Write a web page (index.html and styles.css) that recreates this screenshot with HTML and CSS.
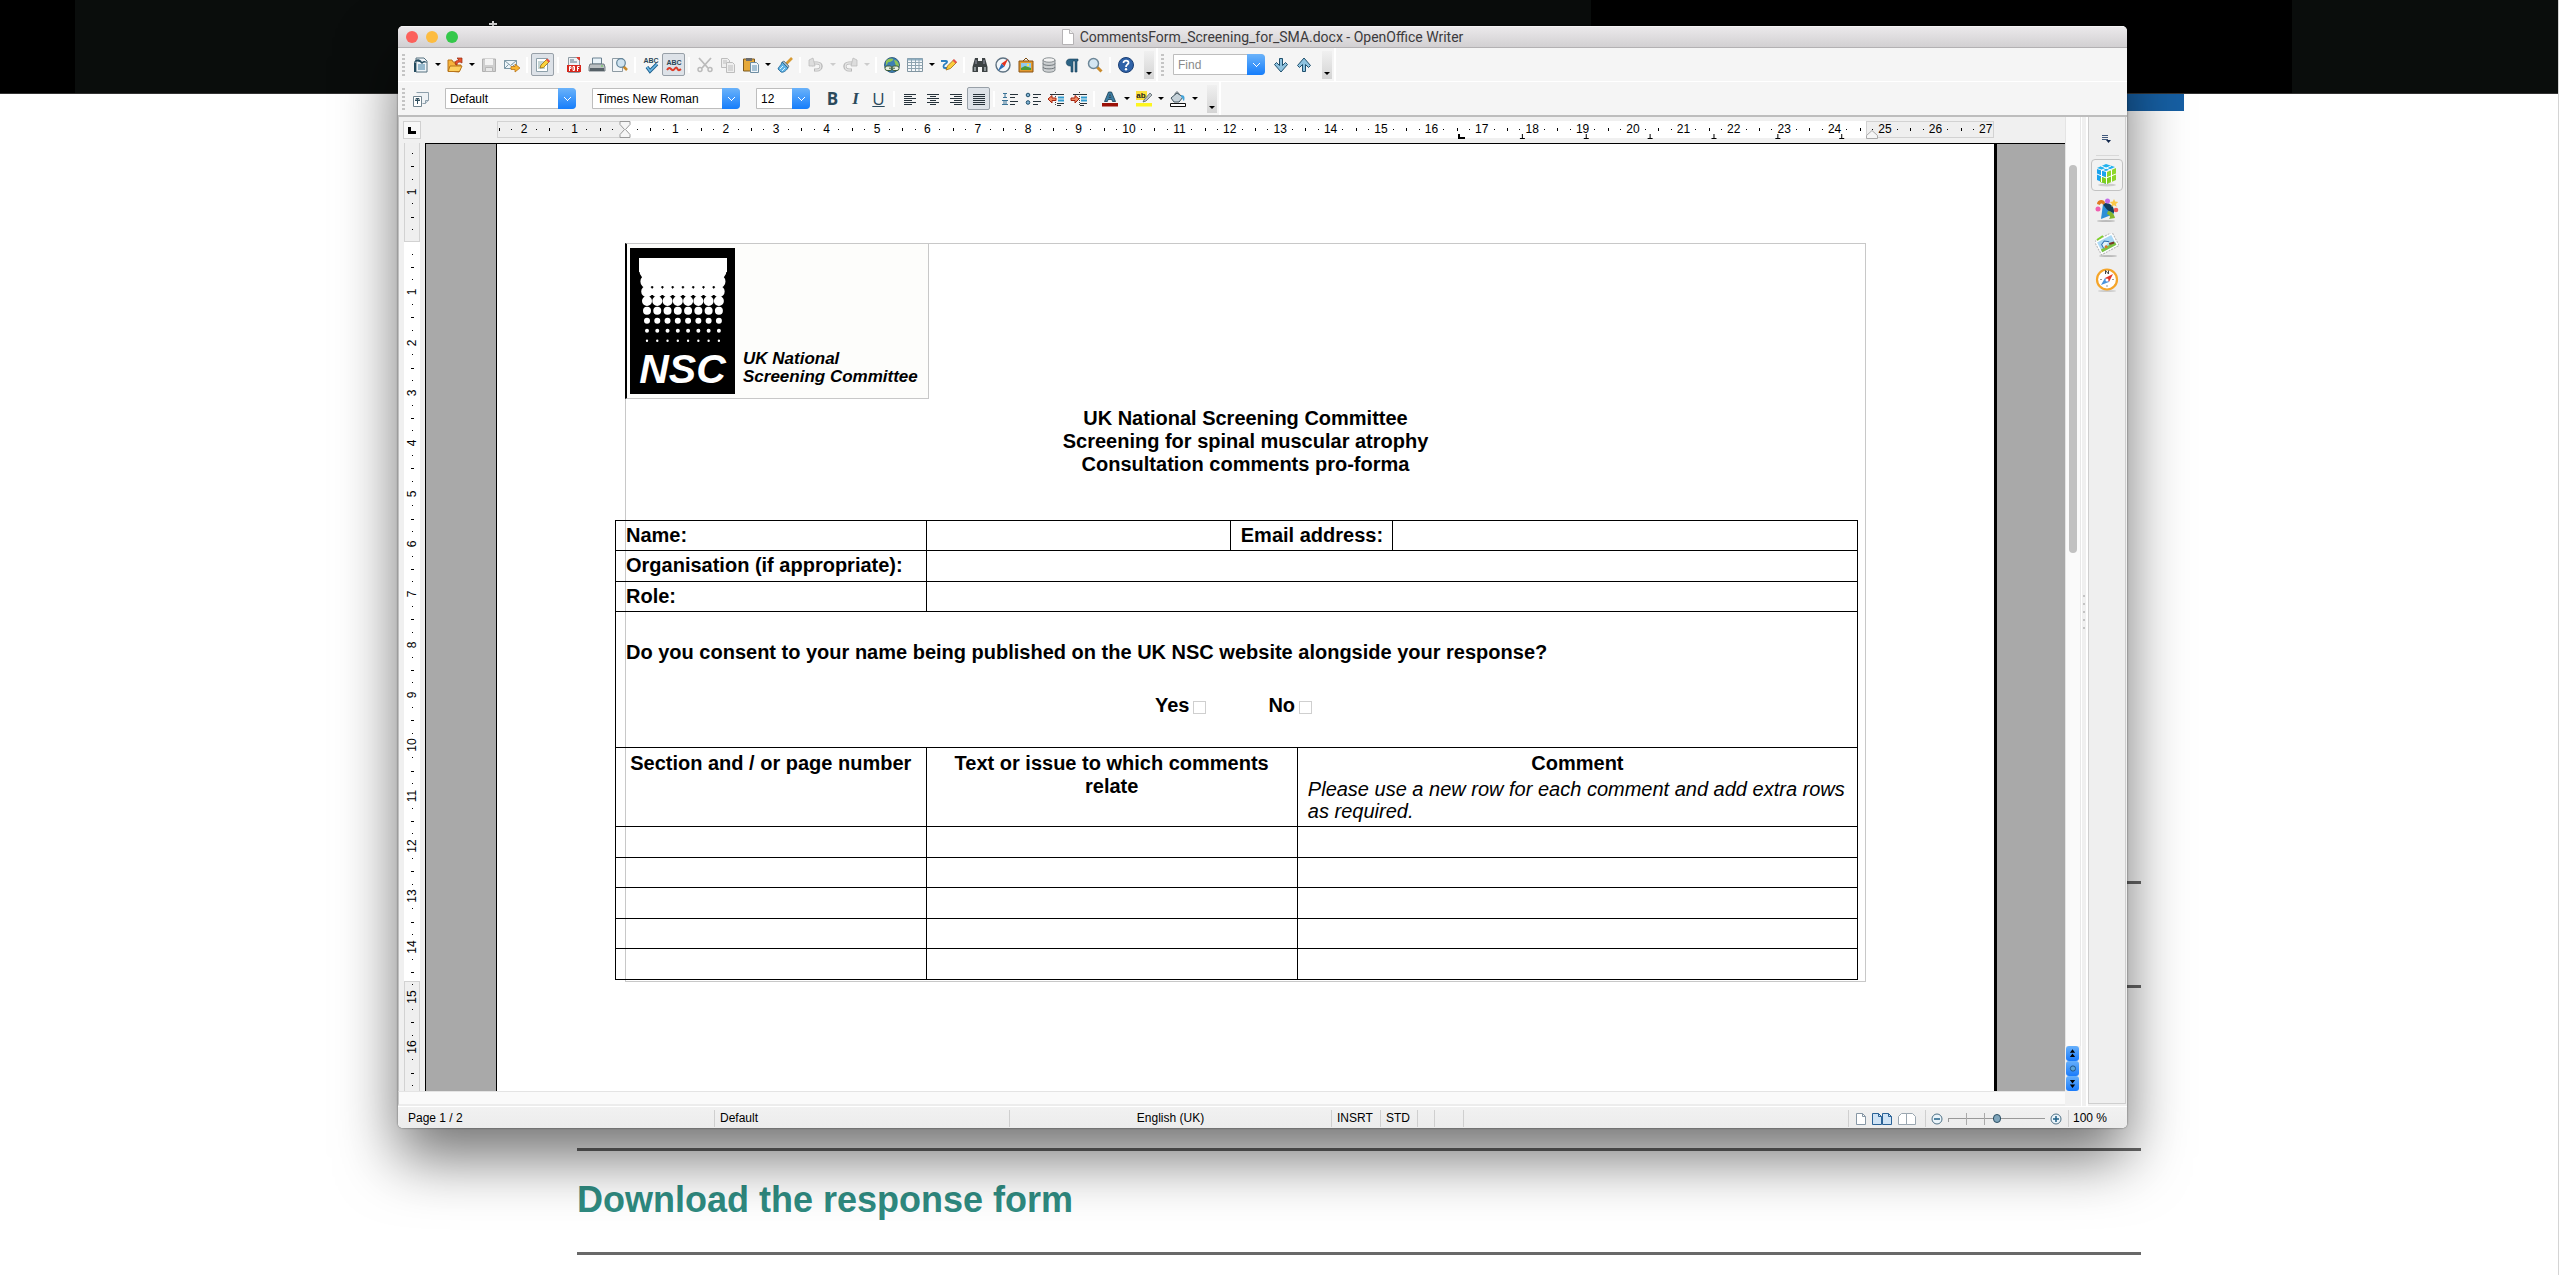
FILE: index.html
```html
<!DOCTYPE html>
<html lang="en-GB">
<head>
<meta charset="utf-8">
<title>CommentsForm_Screening_for_SMA.docx - OpenOffice Writer</title>
<link rel="stylesheet" href="styles.css">
</head>
<body>
<div class="site">
  <header class="site-header"><svg class="crown" width="10" height="8" viewBox="0 0 10 8"><path d="M4 0h2v2h3v2H6v4H4V4H1V2h3z" fill="#ddd"/></svg></header>
  <div class="site-accent"></div>
  <main class="site-main">
    <div class="rule-box"></div>
    <section class="download"><h2>Download the response form</h2></section>
  </main>
</div>

<div class="window">
  <div class="titlebar">
    <div class="lights">
      <button class="light red" aria-label="Close"></button>
      <button class="light amber" aria-label="Minimise"></button>
      <button class="light green" aria-label="Zoom"></button>
    </div>
    <h1 class="title"><svg width="12" height="16" viewBox="0 0 12 16"><path d="M.5.5h7l4 4v11H.5z" fill="#fff" stroke="#b5b3b5"/><path d="M7.500.5v4h4" fill="#eee" stroke="#b5b3b5"/></svg>CommentsForm_Screening_for_SMA.docx - OpenOffice Writer</h1>
  </div>

  <div class="toolbar-row">
    <div class="toolbar">
      <span class="grip"></span>
      <button class="tool" aria-label="New"><svg viewBox="0 0 16 16"><path d="M3 1h8l3 3v11H3z" fill="#eef4f8" stroke="#56707f"/><path d="M5 8h7M5 10h7M5 12h7" stroke="#3f7fa3"/><path d="M1 5c3-4 6-3 8 0 2-2 4-1 5 1-3-1-4 0-5 1C7 4 4 4 1 5z" fill="#234a5e"/><path d="M1 5v10h2V6z" fill="#234a5e"/></svg></button><span class="drop"></span>
      <button class="tool" aria-label="Open"><svg viewBox="0 0 16 16"><path d="M1 14V3h4l1 2h3v3h5l-2 7z" fill="#f6b43c" stroke="#b8741a"/><path d="M3 9h12l-2.500 5.500H1z" fill="#fdd05e" stroke="#b8741a"/><path d="M8 7c0-3 2-4 4-4l-2-2h5v5l-2-1c-2 0-3 1-3 3z" fill="#e8512c" stroke="#962c10" stroke-width=".7"/></svg></button><span class="drop"></span>
      <button class="tool" aria-label="Save"><svg viewBox="0 0 16 16"><path d="M1.500 2h13v12.500h-13z" fill="#cfcfcf" stroke="#b0b0b0"/><path d="M4 2h8v6H4z" fill="#f3f3f3"/><path d="M4.500 10.500h7v4h-7z" fill="#e8e8e8" stroke="#b8b8b8"/></svg></button>
      <button class="tool" aria-label="Document as e-mail"><svg viewBox="0 0 16 16"><path d="M.5 3.500h12v8H.5z" fill="#eef5f9" stroke="#7c97a5"/><path d="M.5 3.500l6 5 6-5M.5 11.500l4-4M12.500 11.500l-4-4" fill="none" stroke="#7c97a5"/><path d="M7 9.500h4V7l5 4-5 4v-2.500H7z" fill="#fbb52d" stroke="#b8741a" stroke-width=".8"/></svg></button>
      <span class="sep"></span>
      <button class="tool on" aria-label="Edit file"><svg viewBox="0 0 16 16"><path d="M1.500 1.500h11v13h-11z" fill="#fff" stroke="#8da0aa"/><path d="M3 5h6M3 7h4M3 9h3M3 11h7" stroke="#8aa"/><path d="M5 11l1-3 6-6 2.500 2.500-6 6z" fill="#fcd23c" stroke="#9a6a10" stroke-width=".8"/><path d="M11 3l1.500-1.500L15 4l-1.500 1.500z" fill="#e5524c"/></svg></button>
      <span class="sep"></span>
      <button class="tool" aria-label="Export as PDF"><svg viewBox="0 0 16 16"><path d="M2.500.5h8l3 3v12h-11z" fill="#eef2f5" stroke="#8d9aa3"/><path d="M4 3h4M4 5h7" stroke="#5a7688"/><path d="M10 0h4v4z" fill="#e33b2e"/><path d="M1 8h14v7H1z" fill="#d7271c"/><path d="M3.500 14V9.500h1.500v2H3.500M7 9.500v4h1.500v-4zM11.500 14V9.500h2M11.500 11.500H13" fill="none" stroke="#fff"/></svg></button>
      <button class="tool" aria-label="Print"><svg viewBox="0 0 16 16"><path d="M3.500 1h9v6h-9z" fill="#e9f2f8" stroke="#6b8191"/><path d="M1 7h14l1 3v4H0v-4z" fill="#b9bec1" stroke="#59656c" stroke-width=".8"/><path d="M1 11h14v3H1z" fill="#566067"/><path d="M12 9h2" stroke="#5fd04a"/></svg></button>
      <button class="tool" aria-label="Page preview"><svg viewBox="0 0 16 16"><path d="M.5 1.500h10v13H.5z" fill="#f2f5f7" stroke="#8d9aa3"/><path d="M11 9l4 4" stroke="#c98a2b" stroke-width="2.500"/><circle cx="9" cy="6" r="4.300" fill="#cfe3f0" stroke="#62849a" stroke-width="1.200"/></svg></button>
      <span class="sep"></span>
      <button class="tool" aria-label="Spelling and grammar"><svg viewBox="0 0 16 16"><text x="8" y="6" class="abc">ABC</text><path d="M4 10l3 4 7-7" fill="none" stroke="#1d5f8e" stroke-width="3.500"/><path d="M4 10l3 4 7-7" fill="none" stroke="#6db9e6" stroke-width="1.600"/></svg></button>
      <button class="tool on" aria-label="AutoSpellcheck"><svg viewBox="0 0 16 16"><text x="8" y="8" class="abc">ABC</text><path d="M1 13c2-3 3-2 4-1s2 2 3.500 0 2-2 3 0 2 1 3.500 0" fill="none" stroke="#dc3c28" stroke-width="2"/></svg></button>
      <span class="sep"></span>
      <button class="tool" aria-label="Cut"><svg viewBox="0 0 16 16"><path d="M2 1l9 10M14 1L5 11" stroke="#bbb" stroke-width="1.800"/><circle cx="3" cy="12.500" r="2" fill="none" stroke="#bbb" stroke-width="1.500"/><circle cx="13" cy="12.500" r="2" fill="none" stroke="#bbb" stroke-width="1.500"/></svg></button>
      <button class="tool" aria-label="Copy"><svg viewBox="0 0 16 16"><g fill="#eee" stroke="#bdbdbd"><path d="M1.500 1.500h6l2 2v7h-8z"/><path d="M6.500 5.500h6l2 2v8h-8z"/><path d="M3 4h4M3 6h3M8 9h5M8 11h5M8 13h5"/></g></svg></button>
      <button class="tool" aria-label="Paste"><svg viewBox="0 0 16 16"><path d="M.5 2h11v12H.5z" fill="#e6a93a" stroke="#7d5a20"/><path d="M3 1h6v3H3z" fill="#6d6d6d"/><path d="M7.500 5.500h6l2 2v8h-8z" fill="#f0f5f9" stroke="#6f8ea3"/><path d="M9 9h5M9 11h5M9 13h5" stroke="#5b8db0"/></svg></button><span class="drop"></span>
      <button class="tool" aria-label="Format paintbrush"><svg viewBox="0 0 16 16"><path d="M9 7l6-6" stroke="#d79a32" stroke-width="2.600"/><path d="M7 4l5 5-1 2-6-6z" fill="#9fb3bf" stroke="#4c6878" stroke-width=".7"/><path d="M5 5l6 6c-2 3-5 5-7 4l-3-3c0-2 3-3 4-7z" fill="#5db1e4" stroke="#20618e" stroke-width=".8"/><path d="M3 12l3-3M5 14l3-3" stroke="#d8efff"/></svg></button>
      <span class="sep"></span>
      <button class="tool" aria-label="Undo"><svg viewBox="0 0 16 16"><path d="M2 6h7c6 0 5 7 0 7H6" fill="none" stroke="#b8b8b8" stroke-width="3.200"/><path d="M5 2.500L1.500 6 5 9.500M2 6h7c5 0 5 7 0 7H7" fill="none" stroke="#e2e2e2" stroke-width="1.400"/><path d="M5 1L1 3v6h6z" fill="#ddd" stroke="#b8b8b8" stroke-width=".7"/></svg></button><span class="drop off"></span>
      <button class="tool" aria-label="Redo"><svg viewBox="0 0 16 16"><path d="M13 6H7c-6 0-5 7 0 7h3" fill="none" stroke="#b8b8b8" stroke-width="3.200"/><path d="M14 6H7c-5 0-5 7 0 7h2" fill="none" stroke="#e2e2e2" stroke-width="1.400"/><path d="M11 1l4 2v6H9z" fill="#ddd" stroke="#b8b8b8" stroke-width=".7"/></svg></button><span class="drop off"></span>
      <span class="sep"></span>
      <button class="tool" aria-label="Hyperlink"><svg viewBox="0 0 16 16"><circle cx="8" cy="8" r="7.500" fill="#3c7fb3" stroke="#1e4b6d" stroke-width=".8"/><path d="M2 4c2-3 6-3 7-2s-2 3-4 3-1 3-3 3zM10 3c3 0 5 3 5 6h-3z" fill="#8fc455"/><g fill="#e9efdf" stroke="#3c5d3c"><rect x="1" y="9" width="7" height="4.500" rx="2"/><rect x="8" y="9" width="7" height="4.500" rx="2"/></g><path d="M5 11.200h6" stroke="#3c5d3c"/></svg></button>
      <button class="tool" aria-label="Table"><svg viewBox="0 0 16 16"><path d="M.5 1.500h15v13H.5z" fill="#f5f8fa" stroke="#8195a1"/><path d="M.5 2.500h15" stroke="#8fb0c4" stroke-width="2"/><path d="M.5 5.500h15M.5 8.500h15M.5 11.500h15M4.500 2v12M8.500 2v12M12 2v12" stroke="#8fa4b0"/></svg></button><span class="drop"></span>
      <button class="tool" aria-label="Show draw functions"><svg viewBox="0 0 16 16"><path d="M0 4h5c2 0 1 2-1 3s-2 4 0 4h2" fill="none" stroke="#2d7fc0" stroke-width="1.800"/><path d="M5 13l1.500-4 6-6L15.500 5.500l-6 6z" fill="#fbcd3c" stroke="#a06a12" stroke-width=".8"/><path d="M11.500 3.500L13 2l3 3-1.500 1.500z" fill="#e5524c"/></svg></button>
      <span class="sep"></span>
      <button class="tool" aria-label="Find and replace"><svg viewBox="0 0 16 16"><path d="M3 1h3v3h4V1h3l2.500 9v5H10v-5H6v5H.5v-5z" fill="#3d4244"/><path d="M2 10h2v4H2zM12 10h2v4h-2z" fill="#8d9598"/><path d="M4 3v4M12 3v4" stroke="#99a"/></svg></button>
      <button class="tool" aria-label="Navigator"><svg viewBox="0 0 16 16"><circle cx="8" cy="8" r="7" fill="#f2f6fa" stroke="#5e7282" stroke-width="1.400"/><path d="M13 2L9.500 9.500 6.500 6.500z" fill="#e5321e"/><path d="M3 14l3.500-7.500 3 3z" fill="#2c6db5"/></svg></button>
      <button class="tool" aria-label="Gallery"><svg viewBox="0 0 16 16"><path d="M5 4l3-3 3 3" fill="none" stroke="#7d4d14"/><path d="M1 4h14v11H1z" fill="#e39a2e" stroke="#8a5212"/><path d="M3 6h10v7H3z" fill="#8fc8ee"/><path d="M3 13v-2l4-2 6 2v2z" fill="#4b9b38"/><circle cx="10" cy="8" r="1.200" fill="#ffe34a"/></svg></button>
      <button class="tool" aria-label="Data sources"><svg viewBox="0 0 16 16"><path d="M2 3v10c0 3 12 3 12 0V3z" fill="#cdd0d2" stroke="#70777b" stroke-width=".8"/><ellipse cx="8" cy="3" rx="6" ry="2.200" fill="#f4f4f4" stroke="#70777b" stroke-width=".8"/><path d="M2 6.500c0 2.500 12 2.500 12 0M2 10c0 2.500 12 2.500 12 0" fill="none" stroke="#70777b"/></svg></button>
      <button class="tool" aria-label="Non-printing characters"><svg viewBox="0 0 16 16"><path d="M14 2H6C1 2 1 9 6 9h1v6h2V4h2v11h2V4h1z" fill="#2c6384" stroke="#17405a" stroke-width=".6"/></svg></button>
      <button class="tool" aria-label="Zoom"><svg viewBox="0 0 16 16"><path d="M10 10l4.500 4.500" stroke="#c98a2b" stroke-width="3"/><circle cx="6.500" cy="6.500" r="5" fill="#d4e6f2" stroke="#6d8798" stroke-width="1.500"/></svg></button>
      <span class="sep"></span>
      <button class="tool" aria-label="Help"><svg viewBox="0 0 16 16"><circle cx="8" cy="8" r="7.500" fill="#2f62a8" stroke="#1b3f74"/><path d="M5.500 6c0-3.500 5.500-3 5 0-.3 1.500-2.500 1.500-2.500 4" fill="none" stroke="#fff" stroke-width="1.800"/><circle cx="8" cy="12.300" r="1.200" fill="#fff"/></svg></button>
      <button class="more" aria-label="Toolbar options"></button>
    </div>
    <div class="toolbar find-bar">
      <span class="grip"></span>
      <label class="combo find"><input type="text" placeholder="Find" aria-label="Find"></label>
      <button class="tool" aria-label="Find next"><svg viewBox="0 0 16 16"><path d="M6.500 1.500h3v7l3-3 2 2L8 15 1.500 7.500l2-2 3 3z" fill="#8fc3e0" stroke="#1f4f6c"/></svg></button>
      <button class="tool" aria-label="Find previous"><svg viewBox="0 0 16 16"><path d="M6.500 14.500h3v-7l3 3 2-2L8 1 1.500 8.500l2 2 3-3z" fill="#8fc3e0" stroke="#1f4f6c"/></svg></button>
      <button class="more" aria-label="Toolbar options"></button>
    </div>
  </div>

  <div class="toolbar-row second">
    <div class="toolbar">
      <span class="grip"></span>
      <button class="tool" aria-label="Styles and formatting"><svg viewBox="0 0 16 16"><path d="M3.500 1.500h12v8l-3 3h-3" fill="#eef2f5" stroke="#8d9fab"/><path d="M12.500 12.500v-3h3" fill="#cdd8df" stroke="#8d9fab"/><path d="M.5 5.500h8v10h-8z" fill="#fff" stroke="#71848f"/><path d="M2 9.500h5M4.500 7v6M3 7.500h3v2H3z" stroke="#33505f" fill="none"/></svg></button>
      <label class="combo style"><select aria-label="Apply style"><option>Default</option></select></label>
      <label class="combo font"><select aria-label="Font name"><option>Times New Roman</option></select></label>
      <label class="combo size"><select aria-label="Font size"><option>12</option></select></label>
      <button class="tool letter b">B</button>
      <button class="tool letter i">I</button>
      <button class="tool letter u">U</button>
      <span class="sep"></span>
      <button class="tool" aria-label="Align left"><svg viewBox="0 0 16 16"><path d="M2 3.500h12M2 5.500h8M2 7.500h12M2 9.500h8M2 11.500h12M2 13.500h8" stroke="#26323a"/></svg></button>
      <button class="tool" aria-label="Centred"><svg viewBox="0 0 16 16"><path d="M2 3.500h12M5 5.500h6M2 7.500h12M5 9.500h6M2 11.500h12M5 13.500h6" stroke="#26323a"/></svg></button>
      <button class="tool" aria-label="Align right"><svg viewBox="0 0 16 16"><path d="M2 3.500h12M6 5.500h8M2 7.500h12M6 9.500h8M2 11.500h12M6 13.500h8" stroke="#26323a"/></svg></button>
      <button class="tool on" aria-label="Justified"><svg viewBox="0 0 16 16"><path d="M2 3.500h12M2 5.500h12M2 7.500h12M2 9.500h12M2 11.500h12M2 13.500h12" stroke="#26323a"/></svg></button>
      <span class="sep"></span>
      <button class="tool" aria-label="Numbering"><svg viewBox="0 0 16 16"><path d="M1 2.500h4M3 2v5M1 6.500h4M0 9.500h6M2 9v5M4 9v5M0 13.500h6" stroke="#3b7396"/><path d="M8 3.500h8M8 6.500h5M8 10.500h8M8 13.500h5" stroke="#26323a"/></svg></button>
      <button class="tool" aria-label="Bullets"><svg viewBox="0 0 16 16"><circle cx="3" cy="4" r="1.800" fill="#7fb2d2" stroke="#1f4f6c"/><circle cx="3" cy="11.500" r="1.800" fill="#7fb2d2" stroke="#1f4f6c"/><path d="M8 3.500h8M8 6.500h5M8 10.500h8M8 13.500h5" stroke="#26323a"/></svg></button>
      <button class="tool" aria-label="Decrease indent"><svg viewBox="0 0 16 16"><path d="M2 3.500h14M9 12.500h7M9 14.500h4" stroke="#26323a"/><path d="M10 6.500h6M10 9.500h6" stroke="#2e9bd0" stroke-width="2"/><path d="M7.500 1v14" stroke="#444" stroke-dasharray="1 1"/><path d="M0 8l4-3.500V7h4v2.500H4V12z" fill="#f08a62" stroke="#a6240e"/></svg></button>
      <button class="tool" aria-label="Increase indent"><svg viewBox="0 0 16 16"><path d="M2 3.500h14M9 12.500h7M9 14.500h4" stroke="#26323a"/><path d="M10 6.500h6M10 9.500h6" stroke="#2e9bd0" stroke-width="2"/><path d="M8.500 1v14" stroke="#444" stroke-dasharray="1 1"/><path d="M8 8L4 4.500V7H0v2.500h4V12z" fill="#f08a62" stroke="#a6240e"/></svg></button>
      <span class="sep"></span>
      <button class="tool" aria-label="Font colour"><svg viewBox="0 0 16 16"><path d="M2.500 10.500L6.500 1h3l4 9.500h-3l-.7-2H6l-.6 2zM7 6.500h2L8 3.500z" fill="#3c7da3" stroke="#163c52" stroke-width=".8"/><path d="M0 12h16v3.500H0z" fill="#9b1108"/></svg></button><span class="drop"></span>
      <button class="tool" aria-label="Highlighting"><svg viewBox="0 0 16 16"><path d="M0 0h11v9H0z" fill="#fbe03b"/><path d="M0 12h16v3.500H0z" fill="#fdf51f"/><text x="5" y="7" class="ab">ab</text><path d="M8 9l6-7 2 2-6 6-3 1z" fill="#b9c0c4" stroke="#5b676e" stroke-width=".8"/></svg></button><span class="drop"></span>
      <button class="tool" aria-label="Background colour"><svg viewBox="0 0 16 16"><path d="M5 4c0-4 4-4 4 0" fill="none" stroke="#4b5a63"/><path d="M1 7l6-5 6 4-4 5H4z" fill="#c6d2d9" stroke="#41545f"/><path d="M11 4c4 0 4 3 3 6-1 0-1-3-3-4z" fill="#44a3d8"/><path d="M.5 12.500h15v3H.5z" fill="#fff" stroke="#111"/></svg></button><span class="drop"></span>
      <button class="more" aria-label="Toolbar options"></button>
    </div>
  </div>

  <div class="workspace">
    <div class="editor">
      <div class="corner"><button class="tab-kind" aria-label="Tab type"><svg width="8" height="7"><path d="M0 0h3v4h5v3H0z"/></svg></button></div>
      <div class="hruler">
        <div class="zones"><span class="margin"></span><span class="text"></span><span class="margin last"></span></div>
        <ol class="cells">
          <li>2</li><li>1</li><li></li><li>1</li><li>2</li><li>3</li><li>4</li><li>5</li><li>6</li><li>7</li><li>8</li><li>9</li><li>10</li><li>11</li><li>12</li><li>13</li><li>14</li><li>15</li><li>16</li><li>17</li><li>18</li><li>19</li><li>20</li><li>21</li><li>22</li><li>23</li><li>24</li><li>25</li><li>26</li><li>27</li>
        </ol>
        <svg class="indent first" width="12" height="17" viewBox="0 0 12 17"><path d="M1 .5h10v3L6.500 8.500 11 13.500v3H1v-3l4.500-5L1 3.500z" fill="#f6f6f6" stroke="#999"/></svg>
        <svg class="indent last" width="12" height="9" viewBox="0 0 12 9"><path d="M.5 8.500v-3l5.500-5 5.500 5v3z" fill="#f6f6f6" stroke="#aaa"/></svg>
        <svg class="stops" viewBox="0 0 390 5" preserveAspectRatio="none"><path d="M0 0h2v3h5v2H0zM64 0h1v4h2v1h-5v-1h2zM128 0h1v4h2v1h-5v-1h2zM192 0h1v4h2v1h-5v-1h2zM256 0h1v4h2v1h-5v-1h2zM320 0h1v4h2v1h-5v-1h2zM384 0h1v4h2v1h-5v-1h2z"/></svg>
      </div>
      <div class="vruler">
        <div class="zones"><span class="margin"></span><span class="text"></span><span class="margin last"></span></div>
        <ol class="cells">
          <li></li><li><b>1</b></li><li></li><li><b>1</b></li><li><b>2</b></li><li><b>3</b></li><li><b>4</b></li><li><b>5</b></li><li><b>6</b></li><li><b>7</b></li><li><b>8</b></li><li><b>9</b></li><li><b>10</b></li><li><b>11</b></li><li><b>12</b></li><li><b>13</b></li><li><b>14</b></li><li><b>15</b></li><li><b>16</b></li><li></li>
        </ol>
      </div>
      <div class="canvas">
        <article class="sheet">
          <div class="text-area">
            <figure class="letterhead">
              <div class="nsc">
                <svg viewBox="0 0 105 96"><g fill="none" stroke="#fff" stroke-linecap="round" stroke-dasharray="0 10.270"><path d="M17 92.700h72.500" stroke-width="2.400"/><path d="M17 82.700h72.500" stroke-width="4"/><path d="M17 72.700h72.500" stroke-width="6"/><path d="M17 62.700h72.500" stroke-width="8"/><path d="M17 53h72.500" stroke-width="10"/><path d="M17 43.500h72.500" stroke-width="11.600"/><path d="M17 33.500h72.500" stroke-width="13.200"/><path d="M17 23.500h72.500" stroke-width="15"/><path d="M17 18h72.500" stroke-width="16"/></g><path d="M9 10h88v14H9z" fill="#fff"/><path d="M0 0h105v10H0z"/></svg>
                <strong>NSC</strong>
              </div>
              <figcaption>UK National<br>Screening Committee</figcaption>
            </figure>
            <h2 class="doc-title">UK National Screening Committee<br>Screening for spinal muscular atrophy<br>Consultation comments pro-forma</h2>
            <table class="form">
              <colgroup><col class="c1"><col class="c2"><col class="c3"><col class="c4"><col></colgroup>
              <tbody>
                <tr><th scope="row">Name:</th><td></td><th scope="row" colspan="2">Email address:</th><td></td></tr>
                <tr><th scope="row">Organisation (if appropriate):</th><td colspan="4"></td></tr>
                <tr><th scope="row">Role:</th><td colspan="4"></td></tr>
                <tr class="consent"><td colspan="5"><p>Do you consent to your name being published on the UK NSC website alongside your response?</p><div class="choices"><label>Yes<input type="checkbox"></label><label>No<input type="checkbox"></label></div></td></tr>
                <tr class="heads"><th scope="col">Section and / or page number</th><th scope="col" colspan="2">Text or issue to which comments relate</th><th scope="col" colspan="2">Comment<em>Please use a new row for each comment and add extra rows as required.</em></th></tr>
                <tr><td></td><td colspan="2"></td><td colspan="2"></td></tr>
                <tr><td></td><td colspan="2"></td><td colspan="2"></td></tr>
                <tr><td></td><td colspan="2"></td><td colspan="2"></td></tr>
                <tr><td></td><td colspan="2"></td><td colspan="2"></td></tr>
                <tr><td></td><td colspan="2"></td><td colspan="2"></td></tr>
              </tbody>
            </table>
          </div>
        </article>
      </div>
      <div class="hscroll"></div>
    </div>
    <div class="vscroll">
      <div class="track"><span class="thumb"></span></div>
      <button aria-label="Previous page"><svg viewBox="0 0 8 10"><path d="M4 0l3 4H1zM4 5l3 4H1z"/></svg></button>
      <button aria-label="Navigation"><svg viewBox="0 0 8 10"><circle cx="4.500" cy="5" r="3" fill="#5aa3d8" stroke="#1c4f80"/></svg></button>
      <button aria-label="Next page"><svg viewBox="0 0 8 10"><path d="M4 5L1 1h6zM4 10L1 6h6z"/></svg></button>
    </div>
    <div class="splitter"><i></i><i></i><i></i><i></i><i></i></div>
    <aside class="sidebar">
      <button class="side menu" aria-label="Sidebar settings"><svg viewBox="0 0 10 10"><path d="M0 1.500h6M0 3.500h6M0 5.500h6" stroke="#41597c"/><path d="M4 6h5L6.500 9z" fill="#12284c"/></svg></button>
      <hr>
      <button class="side on" aria-label="Properties"><svg viewBox="0 0 24 24"><ellipse cx="12" cy="22" rx="9" ry="1.500" fill="#ccc"/><path d="M2 5l9-4 9 3-9 4z" fill="#22b2ee"/><path d="M2 6l9 3v12l-9-4z" fill="#1aa3ee"/><path d="M12 9l9-4v12l-9 4z" fill="#8fd62a"/><path d="M5 15l7-2 6 2-6 6-7-2z" fill="#7fce1e"/><path d="M2 11l9 4 10-4M6.500 7v12M16.500 7v12M11.500 8v13M6 3l10 4M16 3L7 7" stroke="#fff" fill="none"/></svg></button>
      <button class="side" aria-label="Styles and formatting"><svg viewBox="0 0 24 24"><ellipse cx="11" cy="23" rx="9" ry="1" fill="#bbb"/><path d="M8 6c6 0 9 5 11 10l-13 5z" fill="#2b8fd6"/><path d="M8 6c5-3 12 2 11 9-4-1-8-3-11-9z" fill="#123d5e"/><path d="M2 6c0-5 8-5 8-1l-2 2c0-2-3-2-3 0z" fill="#e07b1f"/><path d="M13 13c4 0 6 3 7 7l-6 1c2-2 1-4-2-5z" fill="#86b62d"/><g fill="#f05fb0"><circle cx="3" cy="11" r="2.500"/><circle cx="12.500" cy="3" r="2.500" fill="#c56be8"/><circle cx="21" cy="12" r="2.300" fill="#f05a5a"/></g><path d="M19 1l1.200 2.600 3 .3-2.200 2 .6 2.900L19 7.300l-2.600 1.500.6-2.900-2.200-2 3-.3z" fill="#fbc84a"/></svg></button>
      <button class="side" aria-label="Gallery"><svg viewBox="0 0 24 24"><ellipse cx="13" cy="23" rx="9" ry="1" fill="#bbb"/><g transform="rotate(-28 12 11)"><path d="M2 3h20v15H2z" fill="#fff" stroke="#b5b5b5" stroke-dasharray="2 1"/><path d="M4 5h16v11H4z" fill="#a9d8f5"/><path d="M4 13h16v3H4z" fill="#7cc242"/><path d="M7 13V9l4-2 4 3" fill="#e5f3fb" stroke="#2a6db0"/><circle cx="10" cy="13" r="1.500" fill="#d5792a"/><path d="M14 12l5 1" stroke="#7a3524" stroke-width="2"/></g><path d="M2 7l6-4" stroke="#7fd02a" stroke-width="2"/></svg></button>
      <button class="side" aria-label="Navigator"><svg viewBox="0 0 24 24"><ellipse cx="12" cy="23" rx="9" ry="1" fill="#ccc"/><circle cx="12" cy="11.500" r="10" fill="#fff" stroke="#f5a52a" stroke-width="2.200"/><path d="M10.500 6V2.500l3 3.500V2.500" fill="none" stroke="#444"/><path d="M5 11.500h2M17 11.500h2M12 17v2" stroke="#999"/><path d="M18 6l-4 8-4-4z" fill="#e2382c"/><path d="M6 17l4-7 4 4z" fill="#4a93dc"/><circle cx="12" cy="12" r="1.500" fill="#fff"/></svg></button>
    </aside>
  </div>

  <footer class="status">
    <span class="s-page">Page 1 / 2</span>
    <span class="s-style">Default</span>
    <span class="s-lang">English (UK)</span>
    <span class="s-ins">INSRT</span>
    <span class="s-sel">STD</span>
    <span class="s-mod"></span>
    <span class="s-sig"></span>
    <span class="s-fill"></span>
    <span class="s-views">
      <button class="view" aria-label="Single page"><svg width="10" height="12"><path d="M.5.5h6l3 3v8h-9z" fill="#fff" stroke="#8797a5"/><path d="M6.500.5v3h3" fill="none" stroke="#8797a5"/></svg></button>
      <button class="view" aria-label="Multiple pages"><svg width="20" height="12"><path d="M.5.5h6l3 3v8h-9zM10.500.5h6l3 3v8h-9z" fill="#cfe3f5" stroke="#2a6296"/><path d="M6.500.5v3h3M16.500.5v3h3" fill="none" stroke="#2a6296"/></svg></button>
      <button class="view" aria-label="Book mode"><svg width="18" height="12"><path d="M.5 3.500l3-3h5v11h-8zM8.500.5h6l3 3v8h-9z" fill="#fff" stroke="#9aa6b0"/></svg></button>
    </span>
    <span class="s-zoom">
      <button class="view" aria-label="Zoom out"><svg width="12" height="12"><circle cx="6" cy="6" r="5" fill="#eaf4fa" stroke="#4f7186"/><path d="M3 6h6" stroke="#1f5f86" stroke-width="1.500"/></svg></button>
      <input type="range" min="0" max="100" value="50" aria-label="Zoom">
      <button class="view" aria-label="Zoom in"><svg width="12" height="12"><circle cx="6" cy="6" r="5" fill="#eaf4fa" stroke="#4f7186"/><path d="M3 6h6M6 3v6" stroke="#1f5f86" stroke-width="1.500"/></svg></button>
    </span>
    <span class="s-pct">100 %</span>
  </footer>
</div>
</body>
</html>
```
FILE: styles.css
```css
* { box-sizing: border-box; }

body {
  margin: 0;
  height: 100vh;
  overflow: hidden;
  background: #fff;
  color: #000;
  font-family: "Liberation Sans", Arial, sans-serif;
  font-size: 12px;
}

button, input, select { font: inherit; color: inherit; }
button { padding: 0; border: 0; background: none; }
ol { margin: 0; padding: 0; list-style: none; }

/* Web page behind the window */
.site { min-height: 100vh; border-right: 1px solid #d4d4d4; }

.site-header {
  height: 94px;
  padding: 21px 0 0 488px;
  background: linear-gradient(90deg, #000 75px, #0a0d0c 75px, #0a0d0c 1591px, #000 1591px, #000 2292px, #0a0d0c 2292px);
  border-bottom: 1px solid #333;
}
.crown { display: block; }
.site-accent { height: 17px; margin: 0 374px 0 577px; background: #165fa3; }
.site-main { padding: 770px 417px 0 577px; }
.rule-box { height: 107px; border: solid #686868; border-width: 3px 0; }
.download {
  margin-top: 160px;
  height: 107px;
  border: solid #686868;
  border-width: 3px 0;
  display: flex;
  align-items: center;
}
.download h2 { margin: 0 0 4px; font-size: 36px; line-height: 44px; color: #2f8b81; }

/* Application window */
.window {
  position: absolute;
  inset: 26px 432px 147px 398px;
  display: flex;
  flex-direction: column;
  overflow: hidden;
  border-radius: 5px;
  background: #f5f5f5;
}
.site::after {
  content: "";
  position: absolute;
  inset: 26px 432px 147px 398px;
  border-radius: 5px;
  box-shadow: 0 0 2px rgba(0, 0, 0, .6), 0 30px 60px rgba(0, 0, 0, .55);
}

.titlebar {
  flex: none;
  height: 22px;
  position: relative;
  display: flex;
  align-items: center;
  justify-content: center;
  background: linear-gradient(#ebe9eb, #d2d0d2);
  border-top: 1px solid #f5f4f5;
  border-bottom: 1px solid #b3b1b3;
}
.lights { position: absolute; left: 8px; display: flex; gap: 8px; }
.light { width: 12px; height: 12px; border-radius: 50%; }
.red { background: #fc605b; }
.amber { background: #fdbc40; }
.green { background: #34c84a; }
.title {
  margin: 0;
  display: flex;
  align-items: center;
  gap: 6px;
  font: 400 14px/20px Roboto, "Liberation Sans", sans-serif;
  color: #3c3a3c;
}

/* Toolbars */
.toolbar-row { flex: none; height: 34px; display: flex; border-bottom: 1px solid #fff; }
.toolbar-row.second { height: 35px; border-bottom: 2px solid #bdbdbd; }
.toolbar { display: flex; align-items: center; border-right: 2px solid #fff; padding-right: 2px; }
.grip {
  width: 3px;
  height: 22px;
  margin: 0 4px 0 4px;
  background: repeating-linear-gradient(#c4c4c4 0 2px, transparent 2px 4px);
}
.find-bar .grip { margin: 0 9px 0 3px; }
.tool { width: 23px; height: 23px; display: grid; place-items: center; border: 1px solid transparent; border-radius: 2px; }
.tool svg { width: 16px; height: 16px; display: block; overflow: visible; }
.tool.on { background: #dde2e8; border-color: #98a0a8; }
.sep { width: 8px; height: 16px; background: linear-gradient(#fff, #fff) 3px 0 / 2px 100% no-repeat; }
.drop { width: 11px; display: grid; place-items: center; }
.drop::before, .more::after { content: ""; border: 3px solid transparent; border-top-color: #000; border-bottom: 0; }
.drop.off::before { border-top-color: #ccc; }
.more {
  width: 10px;
  height: 28px;
  margin-left: 7px;
  padding-bottom: 4px;
  display: flex;
  align-items: flex-end;
  justify-content: center;
  background: linear-gradient(#f0f0f0, #d4d4d4);
}
.abc { font: 700 7px "Liberation Sans", sans-serif; text-anchor: middle; fill: #2b4756; }
.ab { font: 700 8px "Liberation Sans", sans-serif; text-anchor: middle; fill: #222; }

.combo { position: relative; height: 21px; display: block; }
.combo::after {
  content: "";
  position: absolute;
  inset: 0 0 0 auto;
  width: 18px;
  border-radius: 0 4px 4px 0;
  background:
    linear-gradient(45deg, transparent 46%, #fff 46% 60%, transparent 60%) 6px 9px / 4px 4px no-repeat,
    linear-gradient(-45deg, transparent 46%, #fff 46% 60%, transparent 60%) 9px 9px / 4px 4px no-repeat,
    linear-gradient(#6bb3fa, #157dfb);
  pointer-events: none;
}
.combo select, .combo input {
  appearance: none;
  width: 100%;
  height: 21px;
  margin: 0;
  padding: 0 20px 0 4px;
  border: 1px solid #bdbdbd;
  border-radius: 0 4px 4px 0;
  background: #fff;
}
.combo input::placeholder { color: #8a8a8a; opacity: 1; }
.combo.style { width: 131px; margin-left: 13px; }
.combo.font { width: 148px; margin-left: 16px; }
.combo.size { width: 54px; margin: 0 11px 0 16px; }
.combo.find { width: 92px; margin-right: 4px; }

.letter { font: 700 17px/20px "Open Sans", sans-serif; color: #2b4a5c; }
.letter.i { font-family: "Liberation Serif", serif; font-style: italic; }
.letter.u { font-weight: 400; text-decoration: underline; }

/* Editor area */
.workspace { flex: 1; min-height: 0; display: flex; background: #f0f0f0; }
.editor {
  flex: 1;
  display: grid;
  grid-template-columns: 27px 1fr;
  grid-template-rows: 26px 1fr 15px;
  min-height: 0;
}
.corner { border-left: 1px solid #c0c0c0; padding: 4px 0 0 4px; }
.tab-kind { width: 18px; height: 18px; border: 1px solid #d0d0d0; display: grid; place-items: center; background: #f8f8f8; }

.hruler { position: relative; margin: 4px 71px 5px 72px; }
.zones { display: flex; height: 100%; }
.zones .margin { flex: 0 0 128px; border: 1px solid #d2d2d2; background: #efefef; }
.zones .text { flex: 1; background: #fff; }
.zones .margin.last { flex-basis: 128px; }
.cells { position: absolute; display: grid; }
.hruler .cells { inset: 0 -17px 0 2px; grid-template-columns: repeat(30, 1fr); line-height: 17px; text-align: center; }
.hruler li {
  background:
    linear-gradient(#000, #000) 0 50% / 1px 3px no-repeat,
    linear-gradient(#000, #000) 25% 50% / 1px 1px no-repeat,
    linear-gradient(#000, #000) 75% 50% / 1px 1px no-repeat;
}
.hruler li:last-child { background-size: 1px 3px, 1px 1px, 0 0; }
.indent { position: absolute; }
.indent.first { left: 122px; top: 0; }
.indent.last { right: 116px; bottom: -1px; }
.stops { position: absolute; right: 147px; bottom: -1px; width: 26%; height: 5px; }

.vruler { position: relative; overflow: hidden; border-left: 1px solid #c0c0c0; padding: 0 5px; }
.vruler .zones { flex-direction: column; }
.vruler .zones .margin { flex: 0 0 99px; border-top: 0; }
.vruler .zones .text { flex: 0 0 739px; }
.vruler .zones .margin.last { flex: 1; border-top: 1px solid #d2d2d2; border-bottom: 0; }
.vruler .cells { inset: -27px 5px -32px 5px; grid-template-rows: repeat(20, 1fr); }
.vruler li {
  display: grid;
  place-items: center;
  background:
    linear-gradient(#000, #000) 50% 0 / 3px 1px no-repeat,
    linear-gradient(#000, #000) 50% 25% / 1px 1px no-repeat,
    linear-gradient(#000, #000) 50% 75% / 1px 1px no-repeat;
}
.vruler b { font-weight: 400; line-height: 14px; transform: rotate(-90deg); }

.canvas { overflow: hidden; padding: 0 68px 0 70px; background: #a9a9a9; border-top: 1px solid #000; border-left: 1px solid #000; }
.sheet { height: 100%; padding: 99px 128px 0 128px; background: #fff; border-left: 1px solid #000; border-right: 3px solid #000; }
.hscroll { grid-column: 1 / -1; background: #fafafa; border: 1px solid #c8c8c8; border-top-color: #e4e4e4; border-right: 0; border-bottom: 2px solid #ececec; }

.text-area { border: 1px solid #c8c8c8; padding-bottom: 1px; font-size: 20px; line-height: 23px; }
.letterhead {
  width: 304px;
  height: 156px;
  margin: -1px 0 0 -1px;
  padding: 4px 0 0 3px;
  display: flex;
  background: #fdfdfb;
  border: 1px solid #c8c8c8;
  border-left: 2px solid #000;
}
.nsc { flex: none; width: 105px; height: 146px; background: #000; color: #fff; text-align: center; }
.nsc svg { display: block; }
.nsc strong { display: block; font-size: 41px; line-height: 50px; font-style: italic; }
.letterhead figcaption { align-self: flex-end; padding: 0 0 12px 8px; font: italic 700 17px/18px "Liberation Sans", sans-serif; white-space: nowrap; }
.doc-title { margin: 8px 0 44px; font-size: 20px; line-height: 23px; text-align: center; }

.form { width: calc(100% + 4px); margin-left: -11px; table-layout: fixed; border-collapse: collapse; }
.c1 { width: 25%; }
.c2 { width: 24.5%; }
.c3 { width: 5.4%; }
.c4 { width: 7.7%; }
.form tr { height: 30px; }
.form tr:nth-child(even) { height: 31px; }
.form tr.consent { height: 136px; }
.form tr.heads { height: 79px; }
.form th, .form td { padding: 3px 10px 0; border: 1px solid #000; text-align: left; vertical-align: top; white-space: nowrap; }
.form .heads th { padding-top: 4px; text-align: center; white-space: normal; }
.form .heads em { display: block; margin-top: 3px; text-align: left; font-weight: 400; line-height: 22px; }
.form .consent td { padding-top: 29px; font-weight: 700; }
.consent p { margin: 0 0 30px; }
.choices { display: flex; justify-content: center; gap: 62px; padding-right: 6px; }
.choices label { display: flex; align-items: center; gap: 4px; }
.choices input { appearance: none; width: 13px; height: 13px; margin: 4px 0 0; border: 1px solid #cfcfcf; background: #fff; }

/* Scroll bar, splitter, sidebar */
.vscroll { width: 16px; padding-bottom: 15px; display: flex; flex-direction: column; background: #f0f0f0; }
.track { flex: 1; background: #fafafa; border-left: 1px solid #e4e4e4; border-right: 1px solid #e8e8e8; padding: 48px 3px 0; }
.thumb { display: block; width: 8px; height: 44%; border-radius: 4px; background: #c1c1c1; }
.vscroll button { width: 13px; height: 15px; margin-left: 1px; display: grid; place-items: center; border-radius: 3px; background: linear-gradient(#67b0fb, #1a7bfb); }
.vscroll button svg { width: 7px; height: 9px; }
.splitter { width: 7px; display: flex; flex-direction: column; justify-content: center; align-items: center; gap: 6px; border: solid #fff; border-width: 0 2px 0 1px; background: #f0f0f0; }
.splitter i { width: 2px; height: 2px; background: #c4c4c4; }
.sidebar {
  width: 38px;
  margin-right: 1px;
  margin-bottom: 2px;
  padding-top: 8px;
  display: flex;
  flex-direction: column;
  align-items: center;
  gap: 3px;
  background: #efefef;
  border: 1px solid #cfcfcf;
  border-top: 0;
}
.side { width: 32px; height: 32px; display: grid; place-items: center; border: 1px solid transparent; border-radius: 4px; }
.side.on { border-color: #c2c2c2; background: #f2f2f2; }
.side svg { width: 24px; height: 24px; display: block; }
.side.menu { height: 27px; }
.side.menu svg { width: 10px; height: 10px; }
.sidebar hr { width: 23px; height: 1px; margin: 0; border: 0; background: #d8d8d8; }

/* Status bar */
.status { flex: none; height: 22px; display: flex; align-items: stretch; border-top: 1px solid #fff; background: linear-gradient(#f1f1f1, #ececec); }
.status > span { border-right: 1px solid #cfcfcf; padding-left: 5px; flex: none; margin: 3px 0 1px; line-height: 17px; }
.status .s-page { width: 317px; padding-left: 10px; }
.s-style { width: 295px; }
.status .s-lang { width: 322px; padding: 0; text-align: center; }
.s-ins { width: 49px; }
.s-sel { width: 37px; }
.s-mod { width: 17px; }
.s-sig { width: 29px; }
.status .s-fill { flex: 1; }
.status .s-views { width: 77px; padding-left: 7px; display: flex; align-items: center; gap: 6px; }
.status .s-zoom { width: 143px; display: flex; align-items: center; gap: 5px; }
.status .s-pct { width: 58px; padding-left: 4px; border: 0; }
.view { display: block; }
.view svg { display: block; }
.s-zoom input {
  appearance: none;
  width: 97px;
  height: 12px;
  margin: 0;
  background:
    linear-gradient(#999, #999) 0 5px / 1px 4px no-repeat,
    linear-gradient(#aaa, #aaa) 18px 0 / 1px 100% no-repeat,
    linear-gradient(#aaa, #aaa) 36px 0 / 1px 100% no-repeat,
    linear-gradient(#999, #999) 0 5px / 100% 1px no-repeat;
}
.s-zoom input::-webkit-slider-thumb { appearance: none; width: 8px; height: 9px; border: 1px solid #2c4f63; border-radius: 4px; background: #7fa5bb; }
```
